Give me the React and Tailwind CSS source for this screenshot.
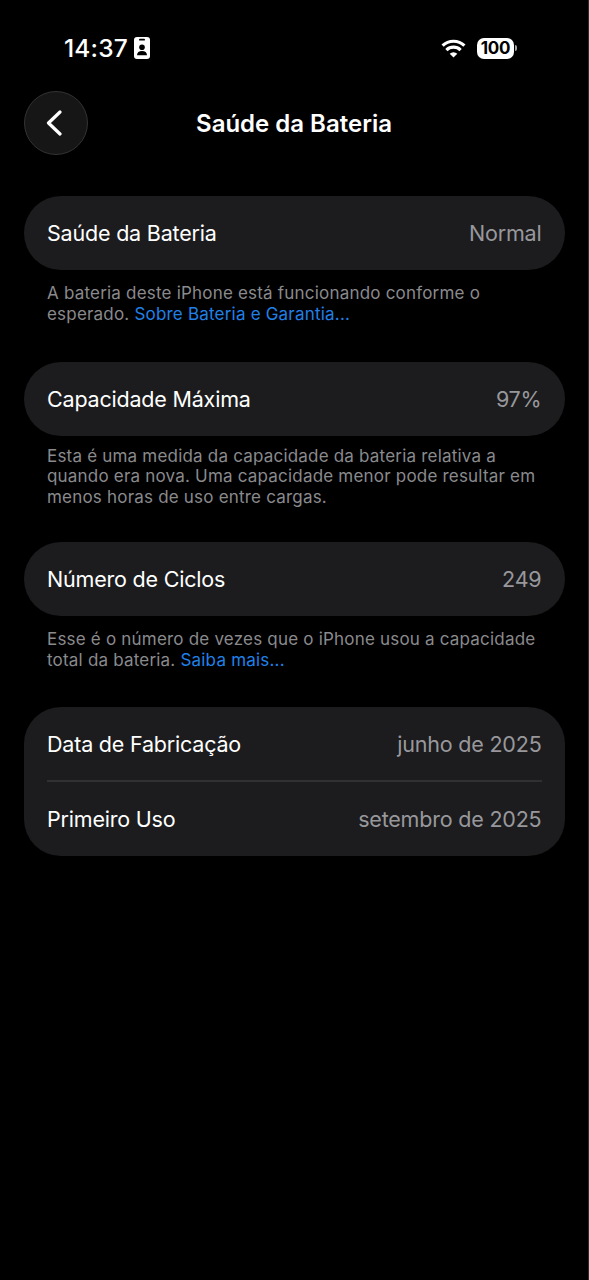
import React from "react";

function StatusBar() {
  return (
    <div className="flex h-[62px] items-center justify-between pt-[34px] pr-[71px] pb-0 pl-[64px]">
      <div className="flex items-center gap-[6.5px]">
        <span className="text-[24.5px] leading-7 font-[550] tracking-[0.15px]">14:37</span>
        <svg width="16" height="22" viewBox="0 0 16 22" aria-hidden="true">
          <rect width="16" height="22" rx="3" fill="#fff" />
          <rect x="5" y="1.8" width="6" height="1.8" rx="0.9" fill="#000" />
          <circle cx="8" cy="10.3" r="2.8" fill="#000" />
          <path d="M3 18.3c0-2.9 2-4.3 5-4.3s5 1.4 5 4.3z" fill="#000" />
        </svg>
      </div>
      <div className="flex items-center gap-[11px]">
        <svg width="25" height="19" viewBox="0 0 25 19" aria-hidden="true">
          <path d="M1.6 6.7a15.6 15.6 0 0 1 21.8 0M5.4 11.1a10.2 10.2 0 0 1 14.2 0" fill="none" stroke="#fff" strokeWidth="3.2" />
          <path d="M12.5 18.6l-3.8-3.8a5.5 5.5 0 0 1 7.6 0z" fill="#fff" />
        </svg>
        <div className="flex items-center gap-px">
          <div className="flex h-[21px] w-[37px] items-center justify-center rounded-[7px] bg-white text-[17px] leading-5 font-bold tracking-[-0.2px] text-black">
            100
          </div>
          <div className="h-[6px] w-[2px] rounded-r-full bg-[#a6a6a6]" />
        </div>
      </div>
    </div>
  );
}

function Row({ label, value }) {
  return (
    <div className="flex h-[74px] items-center justify-between text-[21.5px] tracking-[-0.2px]">
      <span>{label}</span>
      <span className="text-[#98989c]">{value}</span>
    </div>
  );
}

function Section({ rows, children, className }) {
  return (
    <section className={className}>
      <div className="rounded-[37px] bg-[#1c1c1e] px-[23.5px]">
        {rows.map((row, i) => (
          <React.Fragment key={row.label}>
            {i > 0 && <div className="-mt-px h-[2px] bg-[#303033]" />}
            <Row label={row.label} value={row.value} />
          </React.Fragment>
        ))}
      </div>
      {children}
    </section>
  );
}

function Note({ children, className }) {
  return (
    <p className={`px-[23.5px] text-[17px] leading-[20.5px] tracking-[0.2px] whitespace-nowrap text-[#8a8a8d] ${className}`}>
      {children}
    </p>
  );
}

function App() {
  return (
    <main className="h-[1280px] w-full overflow-hidden border-r border-[#2c2c2e] bg-black font-['Inter',sans-serif] text-white">
      <StatusBar />
      <header className="mt-[29px] grid h-16 grid-cols-[64px_1fr_64px] items-center px-[23.5px]">
        <button
          className="flex size-16 items-center justify-center rounded-full border border-[#333335] bg-[#161617] pr-[3px]"
          aria-label="Voltar"
        >
          <svg width="16" height="26" viewBox="0 0 16 26" fill="none" stroke="#fff" strokeWidth="3.2" strokeLinecap="round" strokeLinejoin="round">
            <path d="M14 2L2.5 13L14 24" />
          </svg>
        </button>
        <h1 className="pt-px text-center text-[24px] font-[560]">Saúde da Bateria</h1>
      </header>
      <div className="pt-[41px] pr-[23px] pl-[23.5px]">
        <Section className="h-[166px]" rows={[{ label: "Saúde da Bateria", value: "Normal" }]}>
          <Note className="pt-[13px]">
            A bateria deste iPhone está funcionando conforme o<br />
            esperado. <a className="text-[#2180e8]">Sobre Bateria e Garantia...</a>
          </Note>
        </Section>
        <Section className="h-[180px]" rows={[{ label: "Capacidade Máxima", value: "97%" }]}>
          <Note className="pt-[9.5px]">
            Esta é uma medida da capacidade da bateria relativa a<br />
            quando era nova. Uma capacidade menor pode resultar em<br />
            menos horas de uso entre cargas.
          </Note>
        </Section>
        <Section className="h-[165px]" rows={[{ label: "Número de Ciclos", value: "249" }]}>
          <Note className="pt-[13px]">
            Esse é o número de vezes que o iPhone usou a capacidade<br />
            total da bateria. <a className="text-[#2180e8]">Saiba mais...</a>
          </Note>
        </Section>
        <Section
          rows={[
            { label: "Data de Fabricação", value: "junho de 2025" },
            { label: "Primeiro Uso", value: "setembro de 2025" },
          ]}
        />
      </div>
    </main>
  );
}

export default App;
